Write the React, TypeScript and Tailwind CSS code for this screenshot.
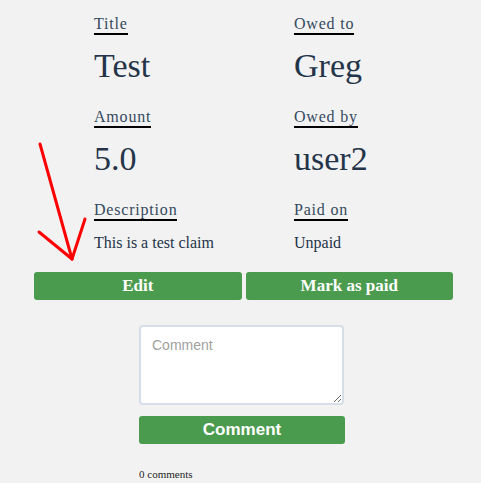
const serif = "font-['Liberation_Serif','Times_New_Roman',serif]";
const sans = "font-['Liberation_Sans',Arial,sans-serif]";

type Field = { label: string; value: string; big?: boolean };

const rows: Field[][] = [
  [
    { label: "Title", value: "Test", big: true },
    { label: "Owed to", value: "Greg", big: true },
  ],
  [
    { label: "Amount", value: "5.0", big: true },
    { label: "Owed by", value: "user2", big: true },
  ],
  [
    { label: "Description", value: "This is a test claim" },
    { label: "Paid on", value: "Unpaid" },
  ],
];

function Cell({ label, value, big }: Field) {
  return (
    <div className="flex flex-col items-start">
      <span
        className={`${serif} text-[16px] leading-[18px] tracking-[0.8px] text-[#34495e] border-b-2 border-black`}
      >
        {label}
      </span>
      {big ? (
        <span className={`${serif} mt-[11px] text-[34px] leading-[40px] text-[#243449]`}>
          {value}
        </span>
      ) : (
        <span className={`${serif} mt-[12px] text-[16px] leading-[20px] text-[#243449]`}>
          {value}
        </span>
      )}
    </div>
  );
}

export default function App() {
  return (
    <div className="relative min-h-screen w-[481px] h-[483px] overflow-hidden bg-[#f2f2f2]">
      <div className="pt-[15px] pl-[94px] flex flex-col gap-[22px]">
        {rows.map((row, i) => (
          <div key={i} className="grid grid-cols-[200px_200px]">
            {row.map((f) => (
              <Cell key={f.label} {...f} />
            ))}
          </div>
        ))}
      </div>

      <div className="mt-[19px] ml-[34px] w-[419px] grid grid-cols-2 gap-[4px]">
        <button className={`${serif} h-[28px] rounded-[3px] bg-[#4b9b4f] text-white font-bold text-[17px]`}>
          Edit
        </button>
        <button className={`${serif} h-[28px] rounded-[3px] bg-[#4b9b4f] text-white font-bold text-[17px]`}>
          Mark as paid
        </button>
      </div>

      <div className="ml-[139px] w-[206px] flex flex-col">
        <textarea
          placeholder="Comment"
          className={`${sans} mt-[25px] h-[80px] w-[205px] rounded-[4px] border-2 border-[#d6dee8] bg-white px-[11px] py-[10px] text-[14px] leading-[17px] placeholder:text-[#a0a0a0] outline-none`}
        />
        <button className={`${sans} mt-[11px] h-[28px] w-[206px] rounded-[3px] bg-[#4b9b4f] text-white font-bold text-[17px]`}>
          Comment
        </button>
        <span className={`${serif} mt-[23px] text-[11px] leading-[14px] text-[#222]`}>0 comments</span>
      </div>

      <svg
        className="absolute left-0 top-0 pointer-events-none"
        width="481"
        height="483"
        viewBox="0 0 481 483"
      >
        <g stroke="#ff0000" strokeWidth="3" strokeLinecap="round" fill="none">
          <line x1="40" y1="144" x2="72" y2="259" />
          <line x1="39" y1="232" x2="72" y2="259" />
          <line x1="85" y1="219" x2="72" y2="259" />
        </g>
      </svg>
    </div>
  );
}
